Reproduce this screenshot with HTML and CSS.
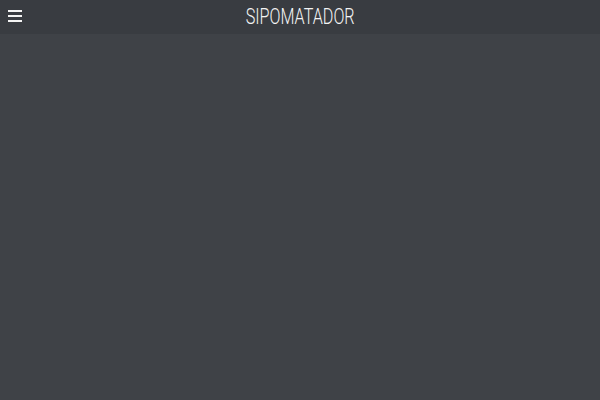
FILE: index.html
```html
<!DOCTYPE html>
<html>
<head>
<meta charset="utf-8">
<link rel="stylesheet" href="styles.css">
</head>
<body>
<header class="topbar">
  <button class="menu-btn" aria-label="Menu">
    <svg width="14" height="12" viewBox="0 0 14 12"><rect x="0" y="0" width="14" height="2" fill="#f4f4f4"/><rect x="0" y="5" width="14" height="2" fill="#f4f4f4"/><rect x="0" y="10" width="14" height="2" fill="#f4f4f4"/></svg>
  </button>
  <h1 class="title">SIPOMATADOR</h1>
</header>
<main class="content"></main>
</body>
</html>
```
FILE: styles.css
```css
html, body {
  margin: 0;
  padding: 0;
  height: 100%;
  background: #3f4247;
}
body {
  display: flex;
  flex-direction: column;
  font-family: Roboto, "Liberation Sans", sans-serif;
}
.topbar {
  height: 34px;
  background: #393c41;
  position: relative;
  display: flex;
  align-items: center;
  justify-content: center;
}
.menu-btn {
  position: absolute;
  left: 8px;
  top: 10px;
  padding: 0;
  border: 0;
  background: none;
  line-height: 0;
}
.title {
  margin: 0;
  color: #f4f4f4;
  font-size: 22px;
  font-weight: 300;
  line-height: 34px;
  transform: scaleX(0.735);
}
.content {
  flex: 1;
}
```
